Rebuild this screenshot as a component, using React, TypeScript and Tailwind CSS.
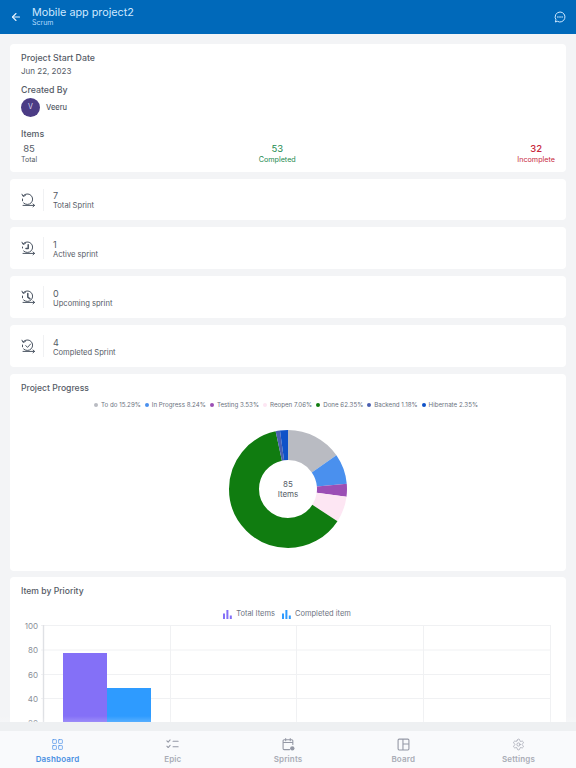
import React from "react";
import { ArrowLeft, LayoutGrid, Settings } from "lucide-react";

const font = "font-['Inter','Noto_Sans',sans-serif]";

function SprintIcon({ kind }: { kind: "total" | "active" | "upcoming" | "completed" }) {
  return (
    <svg width="16" height="16" viewBox="0 0 16 16" fill="none" stroke="#4b5563" strokeWidth="1" strokeLinecap="round" strokeLinejoin="round">
      <path d="M3.4 3.6A5.3 5.3 0 1 1 3.6 11" />
      <path d="M2 2.2 3 4.4 5.3 3.6" />
      <path d="M3 13.4H14.5M13 12 14.6 13.4 13 14.8" />
      <path d="M2.5 7v1.8" strokeDasharray={kind === "active" ? "1 1" : undefined} />
      {kind === "active" && <path d="M8.2 4.8V8.4H6" strokeWidth="1.5" />}
      {kind === "upcoming" && <path d="M7.8 4.6V8.2L10 9.8" strokeWidth="1.5" />}
      {kind === "completed" && <path d="M5.8 7.6 7.5 9.4 10.6 6" />}
    </svg>
  );
}

function Stat({ kind, value, label, first }: { kind: "total" | "active" | "upcoming" | "completed"; value: string; label: string; first?: boolean }) {
  return (
    <div className={`flex shrink-0 items-center rounded bg-white pl-[10px] ${first ? "h-[41px]" : "h-[42px]"}`}>
      <div className="flex w-[16px] justify-center">
        <SprintIcon kind={kind} />
      </div>
      <div className="ml-[7px] h-[22px] w-px bg-[#f0f1f3]" />
      <div className="ml-[9px] flex flex-col pt-[2px]">
        <span className="text-[9px] leading-[11px] text-[#555b66]">{value}</span>
        <span className="text-[7.6px] leading-[10px] text-[#555b66]">{label}</span>
      </div>
    </div>
  );
}

const legend = [
  ["#b9bbc2", "To do 15.29%"],
  ["#4a90ee", "In Progress 8.24%"],
  ["#9b4fb5", "Testing 3.53%"],
  ["#fde6f3", "Reopen 7.06%"],
  ["#107c10", "Done 62.35%"],
  ["#4a5fb0", "Backend 1.18%"],
  ["#0f52c8", "Hibernate 2.35%"],
];

const slices = [15.29, 8.24, 3.53, 7.06, 62.35, 1.18, 2.35];

function Donut() {
  const r = 44;
  const c = 2 * Math.PI * r;
  let acc = 0;
  return (
    <svg width="120" height="120" viewBox="0 0 120 120">
      <g transform="rotate(-90 60 60)">
        {slices.map((s, i) => {
          const len = (s / 100) * c;
          const el = (
            <circle
              key={i}
              cx="60"
              cy="60"
              r={r}
              fill="none"
              stroke={legend[i][0]}
              strokeWidth="30"
              strokeDasharray={`${len} ${c - len}`}
              strokeDashoffset={-acc}
            />
          );
          acc += len;
          return el;
        })}
      </g>
    </svg>
  );
}

function BarGlyph({ color }: { color: string }) {
  return (
    <svg width="9" height="9" viewBox="0 0 9 9" fill={color}>
      <rect x="0" y="3.5" width="2" height="5.5" />
      <rect x="3.4" y="0" width="2" height="9" />
      <rect x="6.8" y="5.5" width="2" height="3.5" />
    </svg>
  );
}

function Chart() {
  const ys = [0, 24.5, 49, 73, 97.5];
  const labels = ["100", "80", "60", "40", "20"];
  const xs = [160, 286, 413, 540];
  return (
    <svg width="556" height="100" viewBox="0 0 556 100" className="block overflow-visible">
      {ys.map((y, i) => (
        <g key={i}>
          <line x1="31" x2="540" y1={y + 0.5} y2={y + 0.5} stroke="#f0f1f3" />
          <text x="28" y={y + 3.5} textAnchor="end" fontSize="8" fill="#8a8f98" fontFamily="Inter">
            {labels[i]}
          </text>
        </g>
      ))}
      {xs.map((x) => (
        <line key={x} x1={x + 0.5} x2={x + 0.5} y1="0" y2="100" stroke="#f0f1f3" />
      ))}
      <line x1="33.5" x2="33.5" y1="0" y2="100" stroke="#dfe1e5" strokeWidth="1.4" />
      <rect x="53" y="28" width="44" height="72" fill="#8470f7" />
      <rect x="97" y="63" width="44" height="37" fill="#2e9bff" />
    </svg>
  );
}

function Nav({ label, active, children }: { label: string; active?: boolean; children: React.ReactNode }) {
  return (
    <div className="flex w-[115px] flex-col items-center">
      {children}
      <span className={`mt-[3px] text-[8px] font-semibold leading-[11px] tracking-[0.02em] ${active ? "text-[#4a90e2]" : "text-[#a9acb6]"}`}>{label}</span>
    </div>
  );
}

export default function App() {
  return (
    <div className={`flex h-[768px] w-[576px] flex-col overflow-hidden bg-[#f3f4f6] ${font}`}>
      <header className="flex h-[34px] shrink-0 items-center bg-[#0069ba] px-[10px] text-white">
        <ArrowLeft size={12} strokeWidth={2.2} className="text-[#e6f3ff]" />
        <div className="mb-[2px] ml-[10px] flex flex-col">
          <span className="text-[10.8px] leading-[13px] text-[#cfe8ff]">Mobile app project2</span>
          <span className="text-[7px] leading-[8px] text-[#b5dcff]">Scrum</span>
        </div>
        <svg width="12" height="12" viewBox="0 0 12 12" fill="none" className="ml-auto">
          <path d="M6 1a5 5 0 1 1-2.6 9.3L1.3 11l.7-2.2A5 5 0 0 1 6 1Z" stroke="#cfe8ff" strokeWidth="1" strokeLinejoin="round" />
          <circle cx="3.9" cy="6" r=".8" fill="#cfe8ff" />
          <circle cx="6" cy="6" r=".8" fill="#cfe8ff" />
          <circle cx="8.1" cy="6" r=".8" fill="#cfe8ff" />
        </svg>
      </header>

      <main className="relative flex min-h-0 flex-1 flex-col gap-[7px] overflow-hidden px-[10px] pt-[10px]">
        <section className="h-[128px] shrink-0 rounded bg-white px-[11px] pt-[8px]">
          <div className="text-[8.8px] font-medium leading-[12px] text-[#555b66]">Project Start Date</div>
          <div className="mt-px text-[8px] leading-[12px] text-[#555b66]">Jun 22, 2023</div>
          <div className="mt-[7px] text-[8.8px] font-medium leading-[12px] text-[#555b66]">Created By</div>
          <div className="mt-[2px] flex items-center">
            <div className="flex h-[19px] w-[19px] items-center justify-center rounded-full bg-[#4b3c85] text-[7px] text-[#dcd8ee]">V</div>
            <span className="ml-[6px] text-[7.5px] font-medium text-[#555b66]">Veeru</span>
          </div>
          <div className="mt-[11px] text-[8.8px] font-medium leading-[12px] text-[#555b66]">Items</div>
          <div className="mt-[2px] flex items-start justify-between">
            <div className="flex flex-col items-center">
              <span className="text-[9.5px] leading-[13px] text-[#555b66]">85</span>
              <span className="text-[7px] leading-[10px] text-[#555b66]">Total</span>
            </div>
            <div className="flex flex-col items-center">
              <span className="text-[9.5px] leading-[13px] text-[#1c8a4e]">53</span>
              <span className="text-[7.2px] leading-[10px] text-[#1c8a4e]">Completed</span>
            </div>
            <div className="flex flex-col items-center">
              <span className="text-[9.5px] font-medium leading-[13px] text-[#c8283c]">32</span>
              <span className="text-[7.2px] leading-[10px] text-[#c8283c]">Incomplete</span>
            </div>
          </div>
        </section>

        <Stat first kind="total" value="7" label="Total Sprint" />
        <Stat kind="active" value="1" label="Active sprint" />
        <Stat kind="upcoming" value="0" label="Upcoming sprint" />
        <Stat kind="completed" value="4" label="Completed Sprint" />

        <section className="-mb-px h-[197px] shrink-0 rounded bg-white pt-[8px]">
          <div className="px-[11px] text-[8.6px] font-medium leading-[12px] text-[#555b66]">Project Progress</div>
          <div className="mt-[6px] flex justify-center gap-[4px] pr-[4px]">
            {legend.map(([color, text]) => (
              <div key={text} className="flex items-center gap-[3px]">
                <span className="h-[4px] w-[4px] rounded-full" style={{ backgroundColor: color }} />
                <span className="text-[6.2px] leading-[10px] text-[#6b7280]">{text}</span>
              </div>
            ))}
          </div>
          <div className="relative mx-auto mt-[19px] h-[120px] w-[120px]">
            <Donut />
            <div className="absolute inset-0 flex flex-col items-center justify-center text-[8px] leading-[10px] text-[#555b66]">
              <span>85</span>
              <span>Items</span>
            </div>
          </div>
        </section>

        <section className="shrink-0 rounded bg-white pt-[8px]">
          <div className="px-[11px] text-[8.6px] font-medium leading-[12px] text-[#555b66]">Item by Priority</div>
          <div className="mt-[12px] flex justify-center gap-[7px] pr-[2px]">
            <div className="flex items-center gap-[4px]">
              <BarGlyph color="#8470f7" />
              <span className="text-[7.5px] leading-[10px] text-[#6b7280]">Total Items</span>
            </div>
            <div className="flex items-center gap-[4px]">
              <BarGlyph color="#2e9bff" />
              <span className="text-[7.5px] leading-[10px] text-[#6b7280]">Completed item</span>
            </div>
          </div>
          <div className="mt-[6px]">
            <Chart />
          </div>
        </section>
        <div className="absolute inset-x-0 bottom-0 h-[6px] bg-gradient-to-b from-transparent to-white/20" />
      </main>

      <div className="h-[9px] shrink-0 bg-[#eef0f2]" />
      <nav className="flex h-[37px] shrink-0 justify-between bg-[#f9fafc] pt-[7px]">
        <Nav label="Dashboard" active>
          <LayoutGrid size={13} strokeWidth={1.2} className="text-[#3f8ae8]" />
        </Nav>
        <Nav label="Epic">
          <svg width="13" height="13" viewBox="0 0 12 12" fill="none" stroke="#9498a5" strokeWidth="1" strokeLinecap="round" strokeLinejoin="round">
            <path d="M.8 2.6 2 3.8 3.8 1.8M.8 7.6 2 8.8 3.8 6.8M6.5 3h4.7M6.5 8h4.7" />
          </svg>
        </Nav>
        <Nav label="Sprints">
          <svg width="13" height="13" viewBox="0 0 12 12" fill="none" stroke="#9498a5" strokeWidth="1" strokeLinecap="round" strokeLinejoin="round">
            <path d="M7 10.7H2A1 1 0 0 1 1 9.7V2.6a1 1 0 0 1 1-1h7a1 1 0 0 1 1 1V6M1 4.2h9M3.4.6v2M7.6.6v2" />
            <circle cx="9.5" cy="9.5" r="2" fill="#9498a5" stroke="none" />
          </svg>
        </Nav>
        <Nav label="Board">
          <svg width="13" height="13" viewBox="0 0 12 12" fill="none" stroke="#9498a5" strokeWidth="1" strokeLinejoin="round">
            <rect x="1" y="1" width="10" height="10" rx="1" />
            <path d="M5.5 1v10M5.5 5.5H11" />
          </svg>
        </Nav>
        <Nav label="Settings">
          <Settings size={13} strokeWidth={1.2} className="text-[#9498a5]" />
        </Nav>
      </nav>
    </div>
  );
}
